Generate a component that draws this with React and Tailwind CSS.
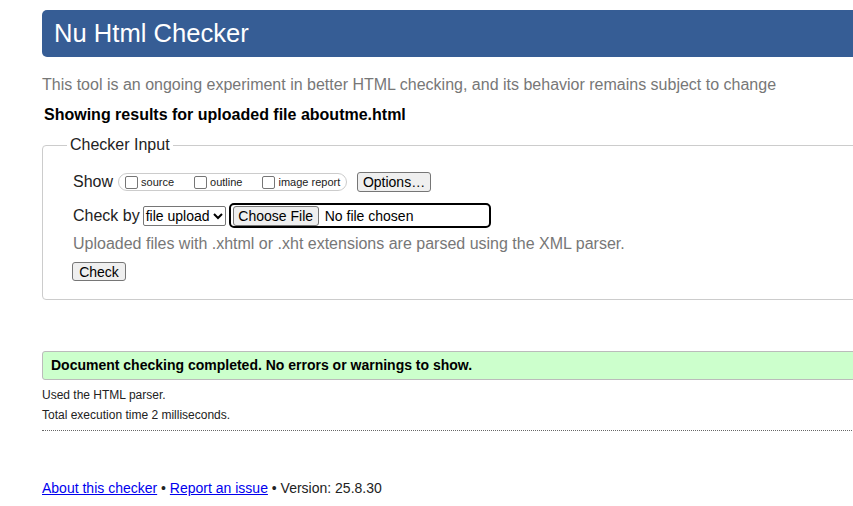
import React from 'react'

const font = { fontFamily: '"Liberation Sans", Arial, sans-serif' }

function Btn({ children, className = '' }) {
  return (
    <span
      className={`inline-flex items-center justify-center bg-[#efefef] border border-[#767676] rounded-[3px] text-[14px] leading-none text-black ${className}`}
    >
      {children}
    </span>
  )
}

function Check({ label }) {
  return (
    <label className="flex items-center">
      <span className="w-[13px] h-[13px] border border-[#767676] rounded-[2px] bg-white shrink-0" />
      <span className="ml-[3px] text-[11px] leading-none text-[#222]">{label}</span>
    </label>
  )
}

export default function App() {
  return (
    <div className="w-screen h-screen overflow-hidden bg-white text-[#222]" style={font}>
      <div className="ml-[42px] w-[1000px] pt-[10px]">
        <h1 className="h-[47px] bg-[#365d95] rounded-l-[5px] text-white text-[25.6px] leading-[47px] pl-[12px]">
          Nu Html Checker
        </h1>

        <p className="mt-[18px] text-[16px] leading-[20px] text-[#777]">
          This tool is an ongoing experiment in better HTML checking, and its behavior remains subject to change
        </p>
        <p className="mt-[10px] ml-[2px] text-[16px] leading-[20px] font-bold text-black">
          Showing results for uploaded file aboutme.html
        </p>

        <fieldset className="mt-[11px] border border-[#ccc] rounded-[4px] pb-[15px]">
          <legend className="ml-[24px] px-[3px] text-[16px] leading-[18px]">Checker Input</legend>

          <div className="pl-[30px]">
            <div className="mt-[18px] flex items-center h-[20px]">
              <span className="text-[16px] leading-none">Show</span>
              <div className="ml-[5px] h-[18px] w-[229px] border border-[#ccc] rounded-full flex items-center pl-[6px] gap-[20px]">
                <Check label="source" />
                <Check label="outline" />
                <Check label="image report" />
              </div>
              <Btn className="ml-[10px] w-[74px] h-[20px]">Options…</Btn>
            </div>

            <div className="mt-[11px] flex items-center h-[25px]">
              <span className="text-[16px] leading-none">Check by</span>
              <span className="ml-[3px] w-[83px] h-[20px] border border-[#767676] rounded-[2px] flex items-center pl-[2px] text-[14px] leading-none text-black">
                file upload
                <svg className="ml-[3px]" width="10" height="8" viewBox="0 0 10 8">
                  <path d="M1 2l4 4 4-4" fill="none" stroke="#000" strokeWidth="2" />
                </svg>
              </span>
              <div className="ml-[3px] w-[262px] h-[25px] border-2 border-black rounded-[5px] flex items-center pl-[2px]">
                <Btn className="w-[86px] h-[20px]">Choose File</Btn>
                <span className="ml-[6px] text-[14px] leading-none text-black">No file chosen</span>
              </div>
            </div>

            <p className="mt-[6px] text-[16px] leading-[20px] text-[#777]">
              Uploaded files with .xhtml or .xht extensions are parsed using the XML parser.
            </p>

            <Btn className="mt-[8px] -ml-[1px] w-[54px] h-[19px]">Check</Btn>
          </div>
        </fieldset>

        <div className="mt-[51px] h-[29px] bg-[#ccffcc] border border-[#bbb] rounded-l-[3px] flex items-center pl-[8px] text-[14px] font-bold text-black">
          Document checking completed. No errors or warnings to show.
        </div>

        <p className="mt-[5px] text-[12px] leading-[20px]">Used the HTML parser.</p>
        <p className="text-[12px] leading-[20px]">Total execution time 2 milliseconds.</p>
        <div className="mt-[5px] border-t border-dotted border-[#666]" />

        <p className="mt-[47px] text-[14px] leading-[20px]">
          <a className="text-[#0000ee] underline" href="#">About this checker</a>
          {' • '}
          <a className="text-[#0000ee] underline" href="#">Report an issue</a>
          {' • Version: 25.8.30'}
        </p>
      </div>
    </div>
  )
}
